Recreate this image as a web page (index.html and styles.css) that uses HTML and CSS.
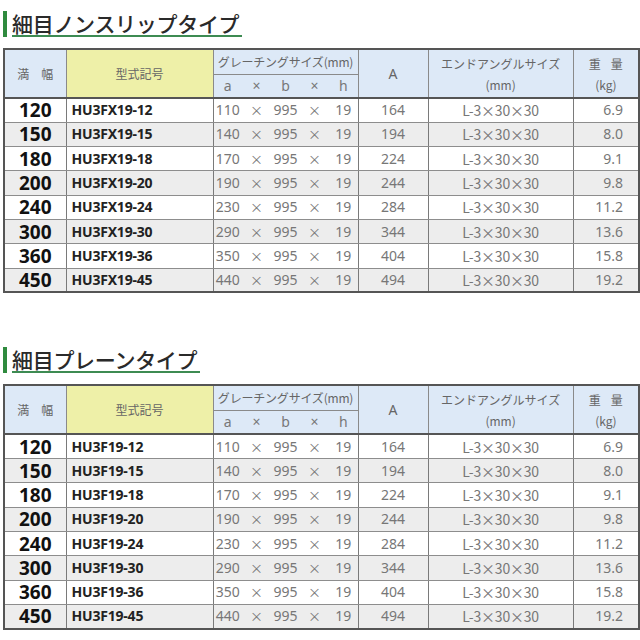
FILE: index.html
```html
<!DOCTYPE html>
<html lang="ja">
<head>
<meta charset="utf-8">
<link rel="stylesheet" href="styles.css">
</head>
<body>
<div class="page">
  <section class="block">
    <h2 class="title"><span class="bar"></span><span class="ttext">細目ノンスリップタイプ</span></h2>
    <table class="spec">
      <colgroup>
        <col class="w-width"><col class="w-model">
        <col class="w-sub"><col class="w-sub"><col class="w-sub"><col class="w-sub"><col class="w-sub">
        <col class="w-a"><col class="w-angle"><col class="w-kg">
      </colgroup>
      <thead>
        <tr class="hr1">
          <th rowspan="2" class="hw"><span>満</span><span>幅</span></th>
          <th rowspan="2" class="hm">型式記号</th>
          <th colspan="5" class="hg">グレーチングサイズ(mm)</th>
          <th rowspan="2" class="ha">A</th>
          <th rowspan="2" class="hn">エンドアングルサイズ<br>(mm)</th>
          <th rowspan="2" class="hk"><span class="kgj"><span>重</span><span>量</span></span><br>(kg)</th>
        </tr>
        <tr class="hr2">
          <th class="sub">a</th><th class="sub">×</th><th class="sub">b</th><th class="sub">×</th><th class="sub">h</th>
        </tr>
      </thead>
      <tbody>
        <tr><td class="cw">120</td><td class="cm">HU3FX19-12</td><td class="g">110</td><td class="g x">×</td><td class="g">995</td><td class="g x">×</td><td class="g">19</td><td class="ca">164</td><td class="cn">L-3×30×30</td><td class="ck">6.9</td></tr>
        <tr><td class="cw">150</td><td class="cm">HU3FX19-15</td><td class="g">140</td><td class="g x">×</td><td class="g">995</td><td class="g x">×</td><td class="g">19</td><td class="ca">194</td><td class="cn">L-3×30×30</td><td class="ck">8.0</td></tr>
        <tr><td class="cw">180</td><td class="cm">HU3FX19-18</td><td class="g">170</td><td class="g x">×</td><td class="g">995</td><td class="g x">×</td><td class="g">19</td><td class="ca">224</td><td class="cn">L-3×30×30</td><td class="ck">9.1</td></tr>
        <tr><td class="cw">200</td><td class="cm">HU3FX19-20</td><td class="g">190</td><td class="g x">×</td><td class="g">995</td><td class="g x">×</td><td class="g">19</td><td class="ca">244</td><td class="cn">L-3×30×30</td><td class="ck">9.8</td></tr>
        <tr><td class="cw">240</td><td class="cm">HU3FX19-24</td><td class="g">230</td><td class="g x">×</td><td class="g">995</td><td class="g x">×</td><td class="g">19</td><td class="ca">284</td><td class="cn">L-3×30×30</td><td class="ck">11.2</td></tr>
        <tr><td class="cw">300</td><td class="cm">HU3FX19-30</td><td class="g">290</td><td class="g x">×</td><td class="g">995</td><td class="g x">×</td><td class="g">19</td><td class="ca">344</td><td class="cn">L-3×30×30</td><td class="ck">13.6</td></tr>
        <tr><td class="cw">360</td><td class="cm">HU3FX19-36</td><td class="g">350</td><td class="g x">×</td><td class="g">995</td><td class="g x">×</td><td class="g">19</td><td class="ca">404</td><td class="cn">L-3×30×30</td><td class="ck">15.8</td></tr>
        <tr><td class="cw">450</td><td class="cm">HU3FX19-45</td><td class="g">440</td><td class="g x">×</td><td class="g">995</td><td class="g x">×</td><td class="g">19</td><td class="ca">494</td><td class="cn">L-3×30×30</td><td class="ck">19.2</td></tr>
      </tbody>
    </table>
  </section>

  <section class="block second">
    <h2 class="title"><span class="bar"></span><span class="ttext">細目プレーンタイプ</span></h2>
    <table class="spec">
      <colgroup>
        <col class="w-width"><col class="w-model">
        <col class="w-sub"><col class="w-sub"><col class="w-sub"><col class="w-sub"><col class="w-sub">
        <col class="w-a"><col class="w-angle"><col class="w-kg">
      </colgroup>
      <thead>
        <tr class="hr1">
          <th rowspan="2" class="hw"><span>満</span><span>幅</span></th>
          <th rowspan="2" class="hm">型式記号</th>
          <th colspan="5" class="hg">グレーチングサイズ(mm)</th>
          <th rowspan="2" class="ha">A</th>
          <th rowspan="2" class="hn">エンドアングルサイズ<br>(mm)</th>
          <th rowspan="2" class="hk"><span class="kgj"><span>重</span><span>量</span></span><br>(kg)</th>
        </tr>
        <tr class="hr2">
          <th class="sub">a</th><th class="sub">×</th><th class="sub">b</th><th class="sub">×</th><th class="sub">h</th>
        </tr>
      </thead>
      <tbody>
        <tr><td class="cw">120</td><td class="cm">HU3F19-12</td><td class="g">110</td><td class="g x">×</td><td class="g">995</td><td class="g x">×</td><td class="g">19</td><td class="ca">164</td><td class="cn">L-3×30×30</td><td class="ck">6.9</td></tr>
        <tr><td class="cw">150</td><td class="cm">HU3F19-15</td><td class="g">140</td><td class="g x">×</td><td class="g">995</td><td class="g x">×</td><td class="g">19</td><td class="ca">194</td><td class="cn">L-3×30×30</td><td class="ck">8.0</td></tr>
        <tr><td class="cw">180</td><td class="cm">HU3F19-18</td><td class="g">170</td><td class="g x">×</td><td class="g">995</td><td class="g x">×</td><td class="g">19</td><td class="ca">224</td><td class="cn">L-3×30×30</td><td class="ck">9.1</td></tr>
        <tr><td class="cw">200</td><td class="cm">HU3F19-20</td><td class="g">190</td><td class="g x">×</td><td class="g">995</td><td class="g x">×</td><td class="g">19</td><td class="ca">244</td><td class="cn">L-3×30×30</td><td class="ck">9.8</td></tr>
        <tr><td class="cw">240</td><td class="cm">HU3F19-24</td><td class="g">230</td><td class="g x">×</td><td class="g">995</td><td class="g x">×</td><td class="g">19</td><td class="ca">284</td><td class="cn">L-3×30×30</td><td class="ck">11.2</td></tr>
        <tr><td class="cw">300</td><td class="cm">HU3F19-30</td><td class="g">290</td><td class="g x">×</td><td class="g">995</td><td class="g x">×</td><td class="g">19</td><td class="ca">344</td><td class="cn">L-3×30×30</td><td class="ck">13.6</td></tr>
        <tr><td class="cw">360</td><td class="cm">HU3F19-36</td><td class="g">350</td><td class="g x">×</td><td class="g">995</td><td class="g x">×</td><td class="g">19</td><td class="ca">404</td><td class="cn">L-3×30×30</td><td class="ck">15.8</td></tr>
        <tr><td class="cw">450</td><td class="cm">HU3F19-45</td><td class="g">440</td><td class="g x">×</td><td class="g">995</td><td class="g x">×</td><td class="g">19</td><td class="ca">494</td><td class="cn">L-3×30×30</td><td class="ck">19.2</td></tr>
      </tbody>
    </table>
  </section>
</div>
</body>
</html>
```
FILE: styles.css
```css
html, body {
  margin: 0;
  padding: 0;
  background: #ffffff;
}
body {
  font-family: "Noto Sans", "Noto Sans CJK JP", sans-serif;
  color: #222;
}
.page {
  padding: 11px 3px 0 3px;
}
.block.second {
  margin-top: 54px;
}
.title {
  display: flex;
  align-items: stretch;
  margin: 0 0 11px 0;
  padding: 0;
  font-weight: 500;
  font-family: "Noto Sans CJK JP", sans-serif;
  font-size: 21px;
  line-height: 24px;
  color: #2a2a2a;
}
.bar {
  width: 4px;
  background: #2f8a3e;
  margin-right: 5px;
}
.ttext {
  border-bottom: 2px solid #3d8b52;
  padding-right: 3px;
  letter-spacing: -0.3px;
}
.spec {
  border-collapse: collapse;
  table-layout: fixed;
  width: 635px;
  border: 2px solid #555;
}
.w-width { width: 62px; }
.w-model { width: 147px; }
.w-sub { width: 29px; }
.w-a { width: 70px; }
.w-angle { width: 145px; }
.w-kg { width: 66px; }

.spec th {
  background: #dde9f7;
  color: #666;
  font-family: "Noto Sans CJK JP", sans-serif;
  font-weight: 400;
  font-size: 12px;
  line-height: 16px;
  border: 1px solid #8a8a8a;
  padding: 0;
}
.spec thead tr.hr2 th {
  border-bottom: 2px solid #555;
}
.spec thead th.hw, .spec thead th.hm, .spec thead th.ha,
.spec thead th.hn, .spec thead th.hk {
  border-bottom: 2px solid #555;
}
.hr1 { height: 25px; }
.hr2 { height: 24px; }
.hw span + span { margin-left: 12px; }
.hm { background: #eef0a8 !important; }
.hg { letter-spacing: -0.2px; font-size: 12px; }
.ha { font-family: "Noto Sans", sans-serif !important; font-size: 14px !important; }
.hn { line-height: 21px !important; }
.hk { line-height: 21px !important; }
.kgj span + span { margin-left: 10px; }
.spec th.sub {
  border-left: none;
  border-right: none;
  font-family: "Noto Sans", sans-serif;
  font-size: 14px;
  color: #777;
}

.spec tbody tr { height: 24.3px; }
.spec tbody tr:nth-child(even) td { background: #ededed; }
.spec td {
  border-top: 1px solid #8d8d8d;
  border-bottom: 1px solid #8d8d8d;
  border-left: 1px solid #7a7a7a;
  border-right: 1px solid #7a7a7a;
  padding: 0;
  text-align: center;
  color: #777;
  font-size: 14px;
  line-height: 20px;
}
.spec td.g {
  border-left: none;
  border-right: none;
}
.spec td.x {
  font-family: "Noto Sans CJK JP", sans-serif;
  font-size: 13px;
}
.spec td.cw {
  font-weight: 700;
  font-size: 19px;
  color: #111;
}
.spec td.cm {
  text-align: left;
  padding-left: 5px;
  font-weight: 700;
  font-size: 14px;
  letter-spacing: -0.2px;
  color: #222;
}
.spec td.ck {
  text-align: right;
  padding-right: 15px;
}
.spec td.cn {
  font-family: "Noto Sans CJK JP", sans-serif;
  letter-spacing: -0.2px;
}
```
